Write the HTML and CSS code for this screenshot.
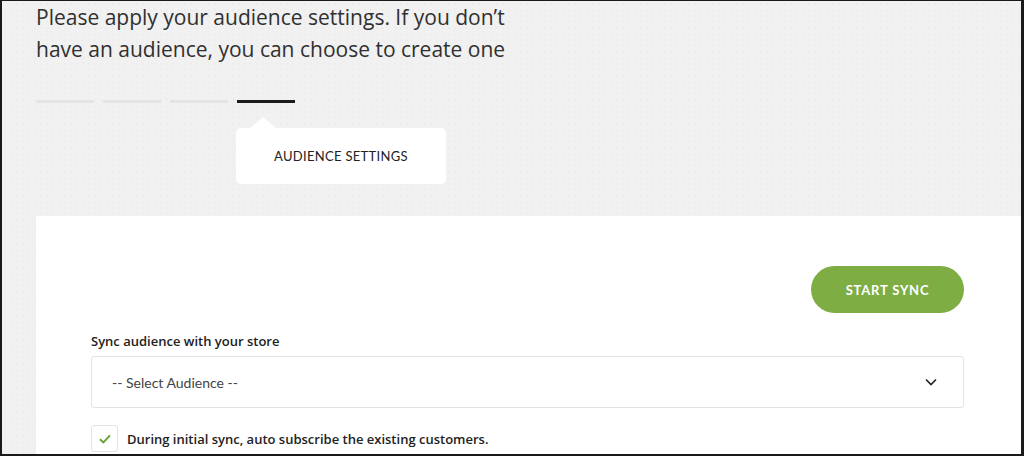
FILE: index.html
```html
<!DOCTYPE html>
<html>
<head>
<meta charset="utf-8">
<link rel="stylesheet" href="styles.css">
</head>
<body>
<div class="frame">
  <div class="page">
    <p class="intro">Please apply your audience settings. If you don’t<br>have an audience, you can choose to create one</p>
    <div class="steps">
      <span class="step"></span>
      <span class="step"></span>
      <span class="step"></span>
      <span class="step active"></span>
    </div>
    <div class="tip">AUDIENCE SETTINGS</div>
    <div class="card">
      <div class="actions">
        <button class="btn">START SYNC</button>
      </div>
      <label class="label">Sync audience with your store</label>
      <div class="select">
        <span>-- Select Audience --</span>
        <svg class="chev" width="12" height="8" viewBox="0 0 12 8"><path d="M1 1.5 L6 6.5 L11 1.5" fill="none" stroke="#222" stroke-width="1.6"/></svg>
      </div>
      <div class="check-row">
        <span class="box"><svg width="12" height="10" viewBox="0 0 12 10"><path d="M1 5.2 L4.4 8.4 L11 1.4" fill="none" stroke="#6aa23a" stroke-width="2"/></svg></span>
        <span class="check-text">During initial sync, auto subscribe the existing customers.</span>
      </div>
    </div>
  </div>
</div>
</body>
</html>
```
FILE: styles.css
```css
html, body {
  margin: 0;
  padding: 0;
  background: #1a1a1a;
}
.frame {
  width: 1024px;
  height: 456px;
  box-sizing: border-box;
  border-style: solid;
  border-color: #1a1a1a;
  border-width: 1px 3px 2px 2px;
  overflow: hidden;
  background-color: #f1f1f1;
  background-image: radial-gradient(#e8e8e8 0.6px, transparent 0.8px);
  background-size: 6px 6px;
}
.page {
  padding-left: 34px;
  font-family: "Lato", "Liberation Sans", sans-serif;
}
.intro {
  margin: 0;
  font-family: "Open Sans", "Liberation Sans", sans-serif;
  font-size: 21px;
  line-height: 32px;
  color: #303030;
  letter-spacing: 0;
}
.steps {
  display: flex;
  gap: 9px;
  margin-top: 35px;
}
.step {
  width: 58px;
  height: 3px;
  background: #e4e4e4;
}
.step.active {
  background: #1c1c1c;
}
.tip {
  position: relative;
  margin-top: 25px;
  margin-left: 200px;
  width: 210px;
  height: 56px;
  background: #fff;
  border-radius: 5px;
  display: flex;
  align-items: center;
  justify-content: center;
  font-size: 13px;
  letter-spacing: 0.3px;
  color: #222;
}
.tip::before {
  content: "";
  position: absolute;
  left: 14px;
  top: -11px;
  border-left: 13px solid transparent;
  border-right: 13px solid transparent;
  border-bottom: 11px solid #fff;
}
.card {
  margin-top: 32px;
  background: #fff;
  height: 260px;
  padding: 50px 0 0 55px;
}
.actions {
  width: 873px;
  display: flex;
  justify-content: flex-end;
}
.btn {
  width: 153px;
  height: 47px;
  border: none;
  border-radius: 24px;
  background: #7dad43;
  color: #fff;
  font-family: "Lato", "Liberation Sans", sans-serif;
  font-weight: 700;
  font-size: 13px;
  letter-spacing: 0.8px;
}
.label {
  display: block;
  margin-top: 20px;
  font-family: "Open Sans", "Liberation Sans", sans-serif;
  font-size: 13px;
  font-weight: 600;
  color: #222;
  line-height: 16px;
}
.select {
  margin-top: 7px;
  width: 873px;
  height: 52px;
  box-sizing: border-box;
  border: 1px solid #e3e3e3;
  border-radius: 3px;
  display: flex;
  align-items: center;
  justify-content: space-between;
  padding: 0 26px 0 20px;
  font-size: 14px;
  color: #444;
}
.check-row {
  margin-top: 17px;
  display: flex;
  align-items: center;
  gap: 9px;
}
.box {
  width: 27px;
  height: 27px;
  box-sizing: border-box;
  border: 1px solid #e3e3e3;
  border-radius: 3px;
  display: flex;
  align-items: center;
  justify-content: center;
}
.check-text {
  font-family: "Open Sans", "Liberation Sans", sans-serif;
  font-size: 13px;
  font-weight: 600;
  color: #222;
}
```
